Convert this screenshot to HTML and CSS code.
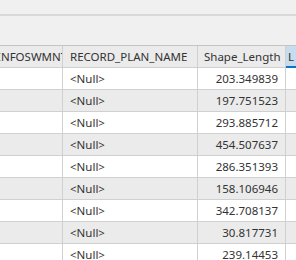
FILE: index.html
```html
<!DOCTYPE html>
<html>
<head>
<meta charset="utf-8">
<link rel="stylesheet" href="styles.css">
</head>
<body>
<div class="topbar"></div>
<div class="toolbar"></div>
<div class="grid">
  <div class="hcell c1 clip"><span class="shift">INFOSWMNT_ID</span></div>
  <div class="hcell c2">RECORD_PLAN_NAME</div>
  <div class="hcell c3">Shape_Length</div>
  <div class="hcell c4 sel">L</div>

  <div class="cell c1"></div><div class="cell c2">&lt;Null&gt;</div><div class="cell c3 num">203.349839</div><div class="cell c4"></div>
  <div class="cell c1 alt"></div><div class="cell c2 alt">&lt;Null&gt;</div><div class="cell c3 num alt">197.751523</div><div class="cell c4 alt"></div>
  <div class="cell c1"></div><div class="cell c2">&lt;Null&gt;</div><div class="cell c3 num">293.885712</div><div class="cell c4"></div>
  <div class="cell c1 alt"></div><div class="cell c2 alt">&lt;Null&gt;</div><div class="cell c3 num alt">454.507637</div><div class="cell c4 alt"></div>
  <div class="cell c1"></div><div class="cell c2">&lt;Null&gt;</div><div class="cell c3 num">286.351393</div><div class="cell c4"></div>
  <div class="cell c1 alt"></div><div class="cell c2 alt">&lt;Null&gt;</div><div class="cell c3 num alt">158.106946</div><div class="cell c4 alt"></div>
  <div class="cell c1"></div><div class="cell c2">&lt;Null&gt;</div><div class="cell c3 num">342.708137</div><div class="cell c4"></div>
  <div class="cell c1 alt"></div><div class="cell c2 alt">&lt;Null&gt;</div><div class="cell c3 num alt">30.817731</div><div class="cell c4 alt"></div>
  <div class="cell c1"></div><div class="cell c2">&lt;Null&gt;</div><div class="cell c3 num">239.14453</div><div class="cell c4"></div>
</div>
</body>
</html>
```
FILE: styles.css
```css
html, body {
  margin: 0;
  padding: 0;
  width: 296px;
  height: 260px;
  overflow: hidden;
  background: #ffffff;
  font-family: "Noto Sans", "Open Sans", sans-serif;
  font-size: 11.5px;
  color: #333333;
}
.topbar {
  height: 14px;
  background: #f0f0f0;
  border-bottom: 2px solid #d8d8d8;
}
.toolbar {
  height: 29px;
  background: #f0f0f0;
  border-bottom: 1px solid #c4c4c4;
}
.grid {
  display: grid;
  grid-template-columns: 63px 135px 88px 1fr;
  grid-auto-rows: 22px;
}
.hcell, .cell {
  box-sizing: border-box;
  border-right: 1px solid #d0d0d0;
  border-bottom: 1px solid #d0d0d0;
  display: flex;
  align-items: center;
  white-space: nowrap;
  overflow: hidden;
}
.hcell {
  background: #ebebeb;
  padding-left: 7px;
}
.hcell.c3 { padding-left: 6px; }
.hcell.clip { padding-left: 0; }
.shift { margin-left: -3px; }
.hcell.sel {
  background: #c7dcef;
  border-bottom: 2px solid #0a74c8;
  border-right: none;
  padding-left: 2px;
}
.cell.c2 { padding-left: 7px; }
.cell.num {
  justify-content: flex-end;
  padding-right: 7px;
}
.cell.c4 { border-right: none; }
.alt { background: #ebebeb; }
```
